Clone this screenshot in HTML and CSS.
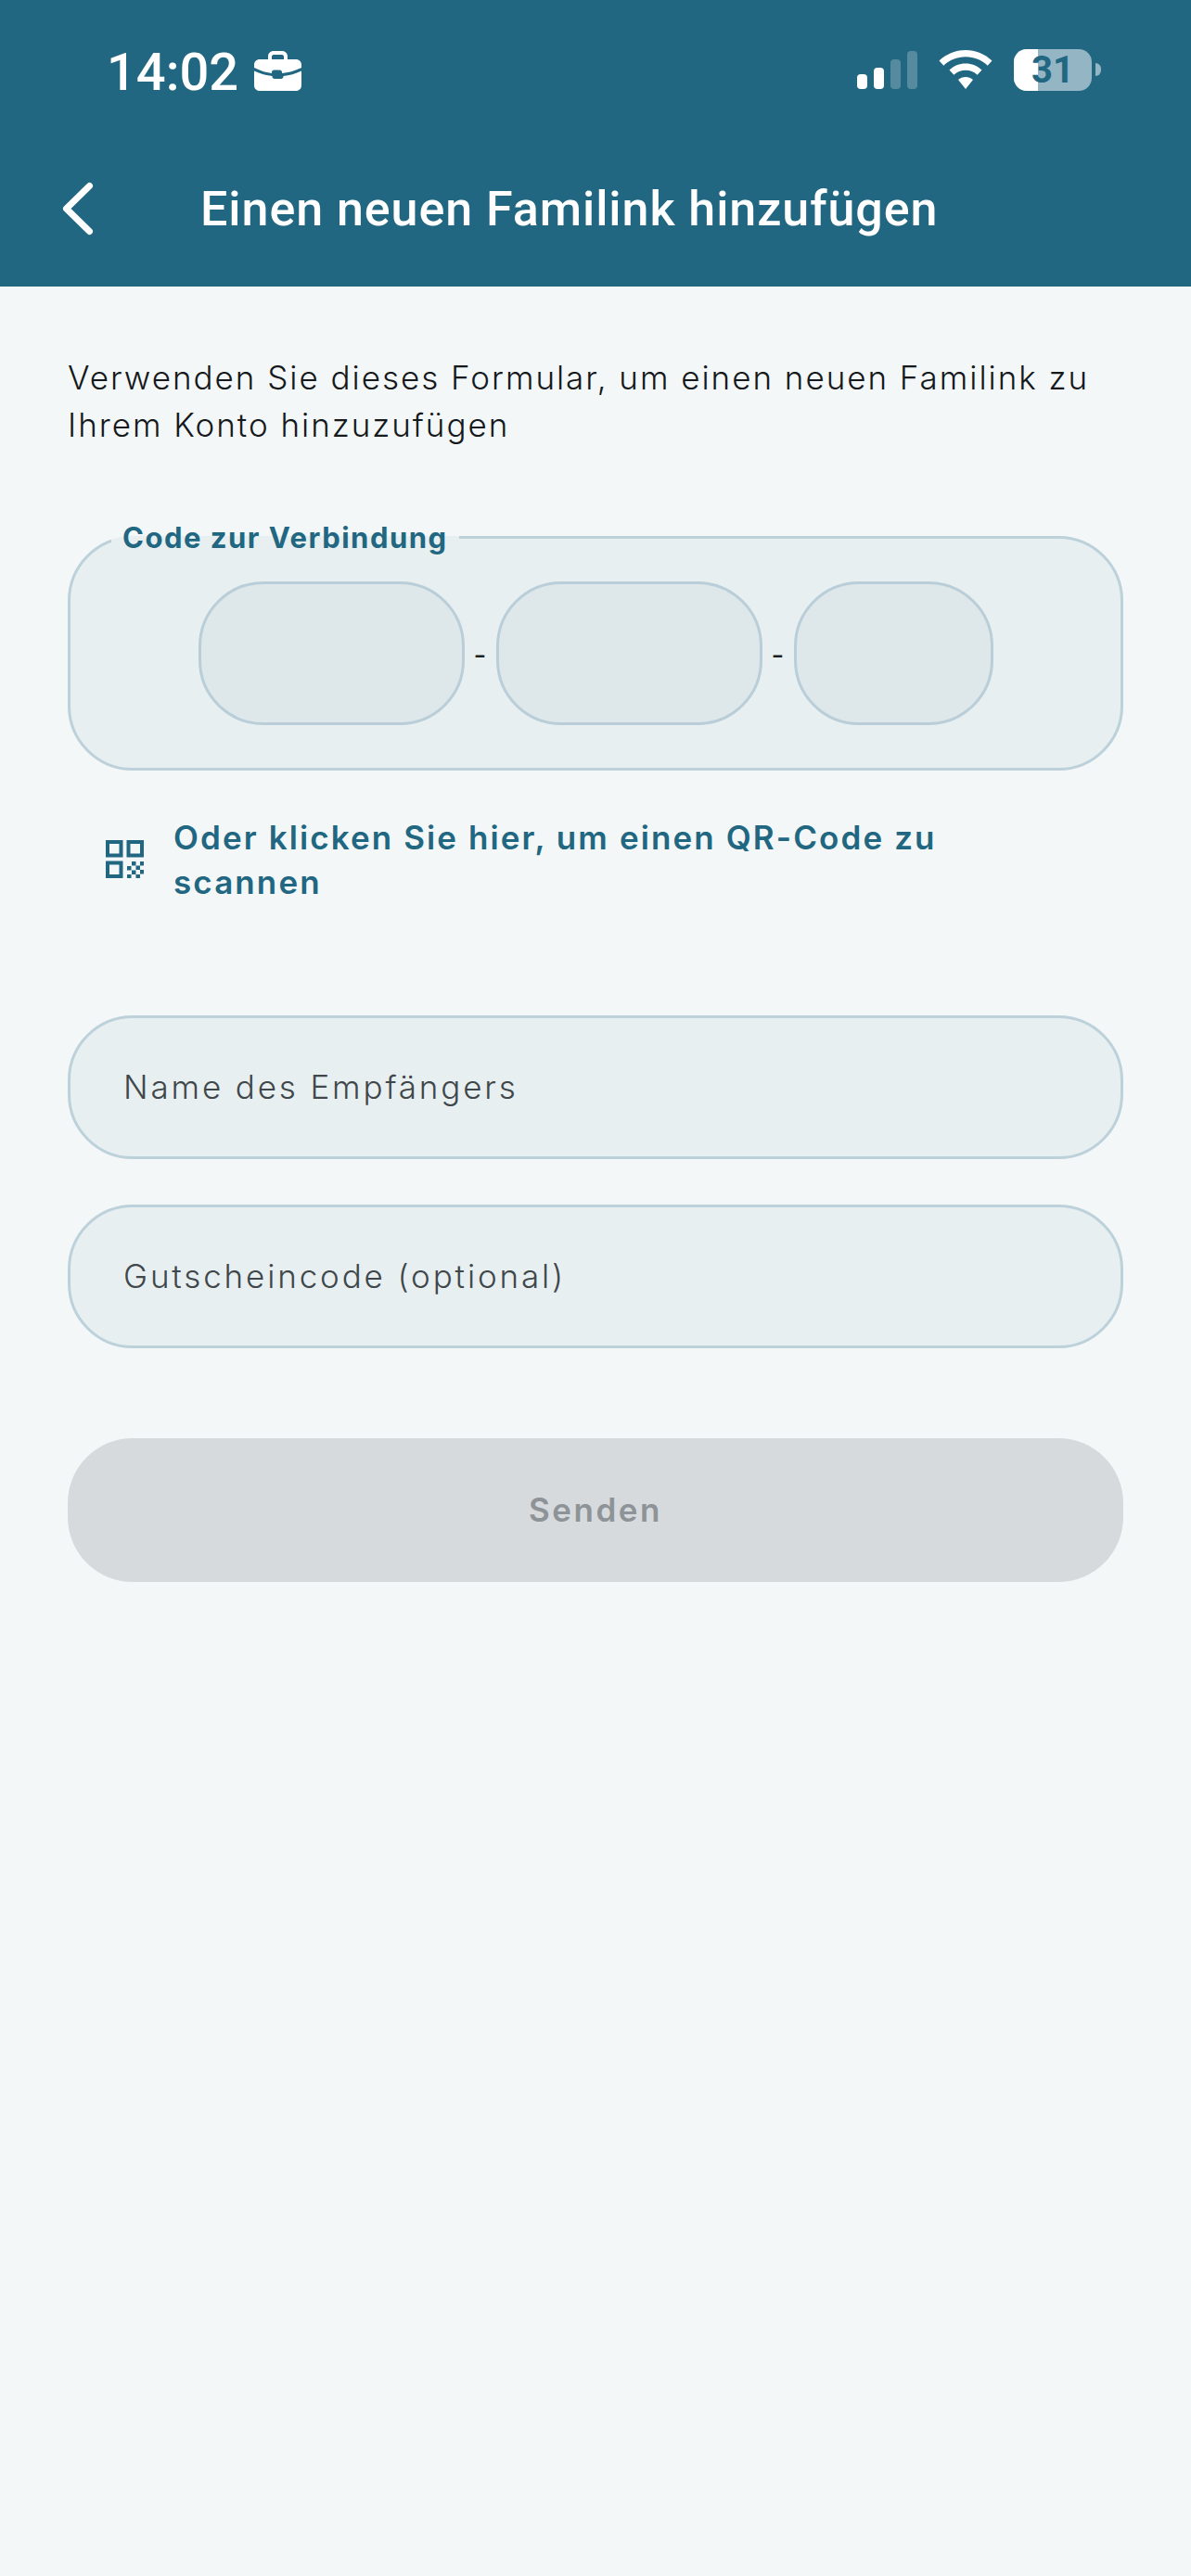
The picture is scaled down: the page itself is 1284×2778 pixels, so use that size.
FILE: index.html
```html
<!DOCTYPE html>
<html lang="de">
<head>
    <meta charset="UTF-8">
    <meta name="viewport" content="width=device-width, initial-scale=1.0">
    <title>Einen neuen Familink hinzufügen</title>
    <link rel="stylesheet" href="styles.css">
</head>
<body>
    <header class="app_header">
        <div class="status_bar">
            <div class="status_left">
                <span class="status_time">14:02</span>
                <svg class="briefcase" width="51" height="43" viewBox="0 0 51 43">
                    <path fill="#fff" fill-rule="evenodd" d="M15 9V6c0-3.500 2.500-6 6-6h9c3.500 0 6 2.500 6 6v3h9c3.500 0 6 2.500 6 6v3c-7 3.500-15 5.500-21 6v-1c0-1.500-1-2.500-2.500-2.500h-6c-1.500 0-2.500 1-2.500 2.500v1C14 23.500 7 21.500 0 18v-3c0-3.500 2.500-6 6-6h9zm4-3v3h13V6c0-1-.8-2-2-2h-9c-1.200 0-2 1-2 2zM0 21.500c6.500 3 13.500 5 19.500 5.500v.5c0 1.500 1 2.500 2.500 2.500h7c1.500 0 2.500-1 2.500-2.500V27c6.500-.5 13-2.500 19.500-5.500V37c0 3.500-2.500 6-6 6H6c-3.500 0-6-2.500-6-6V21.500z"/>
                </svg>
            </div>
            <div class="status_right">
                <div class="signal">
                    <span class="bar bar1"></span>
                    <span class="bar bar2"></span>
                    <span class="bar bar3 off"></span>
                    <span class="bar bar4 off"></span>
                </div>
                <svg class="wifi" width="58" height="42" viewBox="0 0 58 42">
                    <path fill="#fff" d="M29 0c10.800 0 20.800 4.200 28.500 11.500l-4.800 5.300C46.500 10.800 38 7.300 29 7.300S11.500 10.800 5.300 16.800L.5 11.500C8.200 4.200 18.200 0 29 0z"/>
                    <path fill="#fff" d="M29 14.500c6.700 0 12.800 2.500 17.500 7l-4.900 5.200c-3.400-3.200-7.800-5-12.600-5s-9.200 1.800-12.600 5l-4.900-5.200c4.700-4.500 10.800-7 17.500-7z"/>
                    <path fill="#fff" d="M29 29c3 0 5.800 1.100 8 3.100L29 42l-8-9.900c2.200-2 5-3.100 8-3.100z"/>
                </svg>
                <div class="battery">
                    <div class="battery_body">
                        <span class="battery_level"></span>
                        <span class="battery_text">31</span>
                    </div>
                    <span class="battery_nub"></span>
                </div>
            </div>
        </div>
        <div class="nav_bar">
            <svg class="back_icon" width="34" height="58" viewBox="0 0 34 58">
                <path d="M29.500 4.500 4.500 29l25 24.500" fill="none" stroke="#fff" stroke-width="7" stroke-linecap="round" stroke-linejoin="round"/>
            </svg>
            <h1 class="nav_title">Einen neuen Familink hinzufügen</h1>
        </div>
    </header>

    <main class="content">
        <p class="intro">Verwenden Sie dieses Formular, um einen neuen Familink zu<br>Ihrem Konto hinzuzufügen</p>

        <fieldset class="code_box">
            <legend class="code_label">Code zur Verbindung</legend>
            <div class="code_cell code_long"></div>
            <span class="code_dash">-</span>
            <div class="code_cell code_long"></div>
            <span class="code_dash">-</span>
            <div class="code_cell code_short"></div>
        </fieldset>

        <div class="qr_link">
            <svg class="qr_icon" width="41" height="41" viewBox="0 0 41 41">
                <g fill="none" stroke="#216781" stroke-width="4">
                    <rect x="2" y="2" width="14.500" height="14.500"/>
                    <rect x="24.500" y="2" width="14.500" height="14.500"/>
                    <rect x="2" y="24.500" width="14.500" height="14.500"/>
                </g>
                <g fill="#216781">
                    <rect x="28" y="23" width="4.500" height="4.500"/>
                    <rect x="23" y="28" width="4.500" height="4.500"/>
                    <rect x="32.500" y="27.500" width="4.500" height="4.500"/>
                    <rect x="37" y="23" width="4" height="4.500"/>
                    <rect x="28" y="32.500" width="4.500" height="4.500"/>
                    <rect x="37" y="32" width="4" height="4.500"/>
                    <rect x="23" y="37" width="4.500" height="4"/>
                    <rect x="32.500" y="37" width="4.500" height="4"/>
                </g>
            </svg>
            <span class="qr_text">Oder klicken Sie hier, um einen QR-Code zu<br>scannen</span>
        </div>

        <div class="text_field field_name">Name des Empfängers</div>
        <div class="text_field field_voucher">Gutscheincode (optional)</div>

        <div class="send_button">Senden</div>
    </main>
</body>
</html>
```

FILE: styles.css
```css
* {
    box-sizing: border-box;
}

body {
    font-family: Inter, "Open Sans", sans-serif;
    margin: 0;
    padding: 0;
    min-height: 2778px;
    background-color: #f3f7f8;
}

.app_header {
    height: 309px;
    background-color: #216781;
    color: #fff;
    font-family: Roboto, sans-serif;
}

.status_bar {
    display: flex;
    justify-content: space-between;
    align-items: center;
    height: 150px;
    padding: 0 97px 0 115px;
}

.status_left {
    display: flex;
    align-items: center;
    gap: 17px;
}

.status_time {
    padding-top: 5px;
    font-size: 56px;
    font-weight: 500;
    line-height: 66px;
}

.briefcase {
    margin-top: 2px;
}

.status_right {
    display: flex;
    align-items: center;
}

.signal {
    display: flex;
    align-items: flex-end;
    gap: 7px;
    height: 41px;
    margin-right: 23px;
}

.bar {
    width: 11px;
    border-radius: 4px;
    background-color: #fff;
}

.bar1 { height: 16px; }
.bar2 { height: 23px; }
.bar3 { height: 32px; }
.bar4 { height: 41px; }

.bar.off {
    background-color: rgba(255, 255, 255, 0.24);
}

.wifi {
    margin-right: 23px;
}

.battery {
    display: flex;
    align-items: center;
    gap: 4px;
}

.battery_body {
    position: relative;
    width: 84px;
    height: 45px;
    border-radius: 14px;
    overflow: hidden;
    background-color: #93b5c4;
    display: flex;
    align-items: center;
    justify-content: center;
}

.battery_level {
    position: absolute;
    left: 0;
    top: 0;
    bottom: 0;
    width: 26px;
    background-color: #fff;
}

.battery_text {
    position: relative;
    color: #216781;
    font-size: 40px;
    font-weight: 700;
    line-height: 45px;
}

.battery_nub {
    width: 6px;
    height: 14px;
    border-radius: 0 7px 7px 0;
    background-color: #93b5c4;
}

.nav_bar {
    display: flex;
    align-items: center;
    height: 150px;
    padding-left: 67px;
}

.back_icon {
    margin-right: 115px;
}

.nav_title {
    margin: 0;
    padding-top: 2px;
    font-size: 52px;
    font-weight: 500;
    line-height: 60px;
    letter-spacing: 0.94px;
}

.content {
    padding: 0 73px;
}

.intro {
    margin: 73px 0 0;
    font-size: 35px;
    font-weight: 300;
    line-height: 51px;
    letter-spacing: 1.97px;
    color: #15191b;
}

.code_box {
    display: flex;
    justify-content: center;
    align-items: center;
    height: 269px;
    margin: 0;
    margin-top: 78px;
    padding: 0 0 16px 0;
    min-width: 0;
    border: 3px solid #bdd1db;
    border-radius: 70px;
    background-color: #e7eff1;
}

.code_label {
    margin-left: 44px;
    padding: 2px 12px 0;
    font-size: 31px;
    font-weight: 700;
    line-height: 32px;
    letter-spacing: 1.5px;
    color: #216781;
}

.code_cell {
    height: 155px;
    border: 3px solid #b9ced8;
    border-radius: 70px;
    background-color: #dee7e9;
}

.code_long {
    width: 287px;
}

.code_short {
    width: 215px;
}

.code_dash {
    width: 34px;
    padding-top: 4px;
    text-align: center;
    font-size: 30px;
    color: #1b1f21;
}

.qr_link {
    display: flex;
    align-items: center;
    margin-top: 48px;
    padding-left: 41px;
}

.qr_icon {
    flex: none;
    margin-right: 32px;
    margin-top: -2px;
}

.qr_text {
    font-size: 35px;
    font-weight: 600;
    line-height: 48px;
    letter-spacing: 2.1px;
    color: #216781;
}

.text_field {
    display: flex;
    align-items: center;
    height: 155px;
    padding: 0 0 2px 57px;
    border: 3px solid #bdd1db;
    border-radius: 70px;
    background-color: #e7eff1;
    font-size: 35px;
    font-weight: 300;
    letter-spacing: 2.85px;
    color: #40474b;
}

.field_name {
    margin-top: 120px;
}

.field_voucher {
    margin-top: 49px;
}

.send_button {
    display: flex;
    justify-content: center;
    align-items: center;
    height: 155px;
    margin-top: 97px;
    padding-bottom: 2px;
    border-radius: 70px;
    background-color: #d6dadd;
    font-size: 35px;
    font-weight: 600;
    letter-spacing: 2.5px;
    color: #8e9397;
}
```
